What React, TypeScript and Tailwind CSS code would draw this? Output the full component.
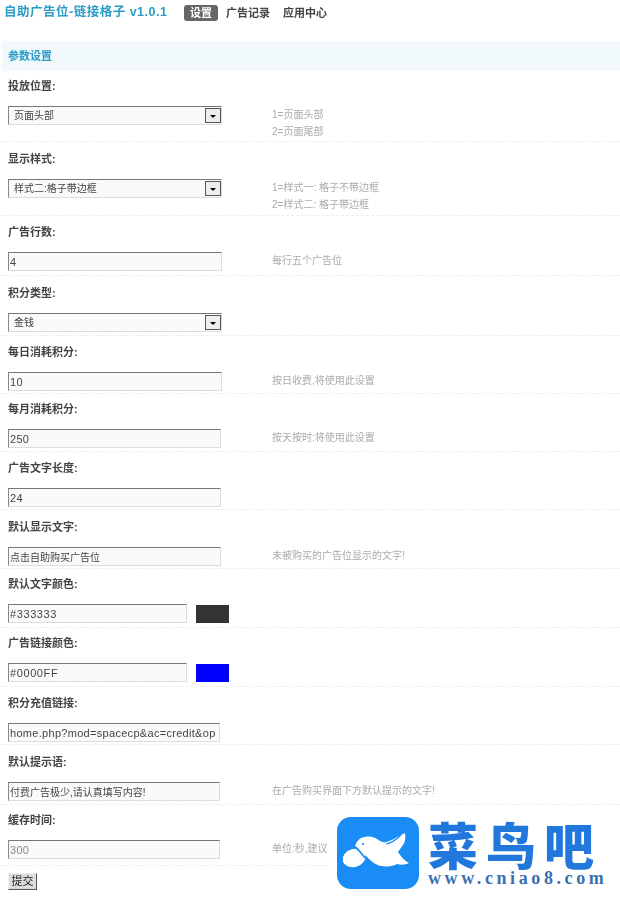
const FONT = "font-['Liberation_Sans','Noto_Sans_CJK_SC',sans-serif]";

type Row = {
  label: string;
  kind: "select" | "input" | "color";
  value: string;
  hints?: string[];
  rowClass: string;
  labelClass: string;
  widthClass?: string;
  swatch?: string;
  dim?: boolean;
  tight?: boolean;
};

const rows: Row[] = [
  { label: "投放位置:", kind: "select", value: "页面头部", hints: ["1=页面头部", "2=页面尾部"], rowClass: "h-[71px]", labelClass: "h-[35px]" },
  { label: "显示样式:", kind: "select", value: "样式二:格子带边框", hints: ["1=样式一: 格子不带边框", "2=样式二: 格子带边框"], rowClass: "h-[74px]", labelClass: "h-[37px]" },
  { label: "广告行数:", kind: "input", value: "4", hints: ["每行五个广告位"], rowClass: "h-[60px]", labelClass: "h-[36px]", widthClass: "w-[214px]" },
  { label: "积分类型:", kind: "select", value: "金钱", rowClass: "h-[60px]", labelClass: "h-[37px]" },
  { label: "每日消耗积分:", kind: "input", value: "10", hints: ["按日收费,将使用此设置"], rowClass: "h-[58px]", labelClass: "h-[36px]", widthClass: "w-[214px]" },
  { label: "每月消耗积分:", kind: "input", value: "250", hints: ["按天按时:将使用此设置"], rowClass: "h-[58px]", labelClass: "h-[35px]", widthClass: "w-[213px]" },
  { label: "广告文字长度:", kind: "input", value: "24", rowClass: "h-[58px]", labelClass: "h-[36px]", widthClass: "w-[213px]" },
  { label: "默认显示文字:", kind: "input", value: "点击自助购买广告位", hints: ["未被购买的广告位显示的文字!"], rowClass: "h-[59px]", labelClass: "h-[37px]", widthClass: "w-[213px]", tight: true },
  { label: "默认文字颜色:", kind: "color", value: "#333333", swatch: "bg-[#333333]", rowClass: "h-[59px]", labelClass: "h-[35px]" },
  { label: "广告链接颜色:", kind: "color", value: "#0000FF", swatch: "bg-[#0000ff]", rowClass: "h-[59px]", labelClass: "h-[35px]" },
  { label: "积分充值链接:", kind: "input", value: "home.php?mod=spacecp&ac=credit&op", rowClass: "h-[58px]", labelClass: "h-[36px]", widthClass: "w-[212px]" },
  { label: "默认提示语:", kind: "input", value: "付费广告极少,请认真填写内容!", hints: ["在广告购买界面下方默认提示的文字!"], rowClass: "h-[60px]", labelClass: "h-[37px]", widthClass: "w-[212px]", tight: true },
  { label: "缓存时间:", kind: "input", value: "300", hints: ["单位:秒,建议设置为3600"], rowClass: "h-[61px]", labelClass: "h-[35px]", widthClass: "w-[212px]", dim: true },
];

const boxBase =
  "h-[19px] border-t border-l border-t-[#777] border-l-[#888] border-r border-b border-r-[#ddd] border-b-[#ddd] bg-[#fafafa] leading-[17px] text-[#444] outline-none";

function Field({ row }: { row: Row }) {
  if (row.kind === "select") {
    return (
      <div className="relative w-[214px]">
        <select
          defaultValue={row.value}
          className={`${boxBase} ${FONT} w-full appearance-none pl-[5px] text-[10px]`}
        >
          <option>{row.value}</option>
        </select>
        <span className="absolute right-[1px] top-[2px] flex h-[15px] w-[16px] items-center justify-center border border-[#555] bg-[#eeeeee]">
          <span className="mt-[2px] h-0 w-0 border-x-[3px] border-t-[3px] border-x-transparent border-t-black" />
        </span>
      </div>
    );
  }
  if (row.kind === "color") {
    return (
      <div className="flex items-center gap-[9px]">
        <input
          readOnly
          value={row.value}
          className={`${boxBase} ${FONT} w-[179px] pl-[1px] text-[11px] tracking-[0.6px]`}
        />
        <span className={`h-[18px] w-[33px] ${row.swatch}`} />
      </div>
    );
  }
  return (
    <input
      readOnly
      value={row.value}
      className={`${boxBase} ${FONT} ${row.widthClass} pl-[1px] ${row.tight ? "text-[10px]" : "text-[11px] tracking-[0.3px]"} ${row.dim ? "text-[#888]" : ""}`}
    />
  );
}

function Logo() {
  return (
    <div className="absolute left-[328px] top-[808px] flex h-[92px] w-[292px] items-start bg-white pl-[9px] pt-[9px]">
      <svg viewBox="0 0 82 72" className="h-[72px] w-[82px] shrink-0">
        <rect x="0" y="0" width="82" height="72" rx="14" fill="#1a8cf5" />
        <path
          d="M18 29 C20 24 23 20 28 20 C33 19 37 20 40 22 C43 24 46 26 49 25 C54 24 60 20 68 16 C69 21 68 25 66 28 C64 31 62 33 61 35 C64 40 68 44 72 46 C68 48 64 48 60 47 C57 49 50 50 44 49 C38 48 33 43 28 38 C24 34 21 31 18 29 Z"
          fill="#ffffff"
        />
        <ellipse cx="17" cy="41" rx="11.5" ry="9" fill="#ffffff" transform="rotate(-15 17 41)" />
        <path d="M18 30 C22 33 25 37 28 41" stroke="#1a8cf5" strokeWidth="1.6" fill="none" />
        <path d="M49 27 C55 26 60 22 64 18" stroke="#1a8cf5" strokeWidth="1.2" fill="none" />
        <circle cx="26" cy="27" r="1.1" fill="#1a8cf5" />
      </svg>
      <div className="ml-[9px] flex flex-col">
        <span className="whitespace-nowrap font-['Noto_Sans_CJK_SC',sans-serif] text-[50px] font-black leading-[52px] tracking-[8px] text-[#2277dd]">
          菜鸟吧
        </span>
        <span className="whitespace-nowrap font-['Liberation_Serif',serif] text-[18px] font-bold leading-[18px] tracking-[3.6px] text-[#3a6fb0]">
          www.cniao8.com
        </span>
      </div>
    </div>
  );
}

export default function App() {
  return (
    <div className={`relative h-[900px] w-[620px] overflow-hidden bg-white ${FONT} text-[11px]`}>
      <div className="flex h-[41px] items-start blur-[0.3px]">
        <span className="ml-[4px] mt-[4px] w-[180px] text-[12.5px] font-bold leading-[17px] tracking-[0.5px] text-[#2a9cc8]">
          自助广告位-链接格子 v1.0.1
        </span>
        <span className="mt-[5px] flex h-[16px] w-[34px] items-center justify-center rounded-[3px] bg-[#666] text-[11px] font-bold text-white">
          设置
        </span>
        <span className="ml-[8px] mt-[5px] w-[57px] text-[11px] font-bold leading-[16px] text-[#444]">广告记录</span>
        <span className="mt-[5px] text-[11px] font-bold leading-[16px] text-[#444]">应用中心</span>
      </div>

      <div className="ml-[2px] flex h-[30px] items-center bg-[#f1f9fc] pl-[6px] text-[11px] font-bold text-[#2a9cc8] blur-[0.3px]">
        参数设置
      </div>

      {rows.map((row) => (
        <div key={row.label} className={`${row.rowClass} border-b border-dashed border-b-[#eeeeee] pl-[8px]`}>
          <div className={`${row.labelClass} flex flex-col justify-end pb-[12px] text-[11px] font-bold leading-[16px] text-[#444] blur-[0.3px]`}>
            {row.label}
          </div>
          <div className="flex items-start">
            <div className="w-[264px] shrink-0 blur-[0.3px]">
              <Field row={row} />
            </div>
            {row.hints && (
              <div className="flex flex-col text-[10px] leading-[17px] text-[#aaaaaa] blur-[0.3px]">
                {row.hints.map((h) => (
                  <span key={h} className="whitespace-pre">{h}</span>
                ))}
              </div>
            )}
          </div>
        </div>
      ))}

      <div className="pl-[8px] pt-[7px]">
        <button className="flex h-[17px] w-[29px] items-center justify-center border border-t-[#eee] border-l-[#eee] border-r-[#555] border-b-[#555] bg-[#dddddd] text-[11px] leading-none text-[#222] blur-[0.3px]">
          提交
        </button>
      </div>

      <Logo />
    </div>
  );
}
